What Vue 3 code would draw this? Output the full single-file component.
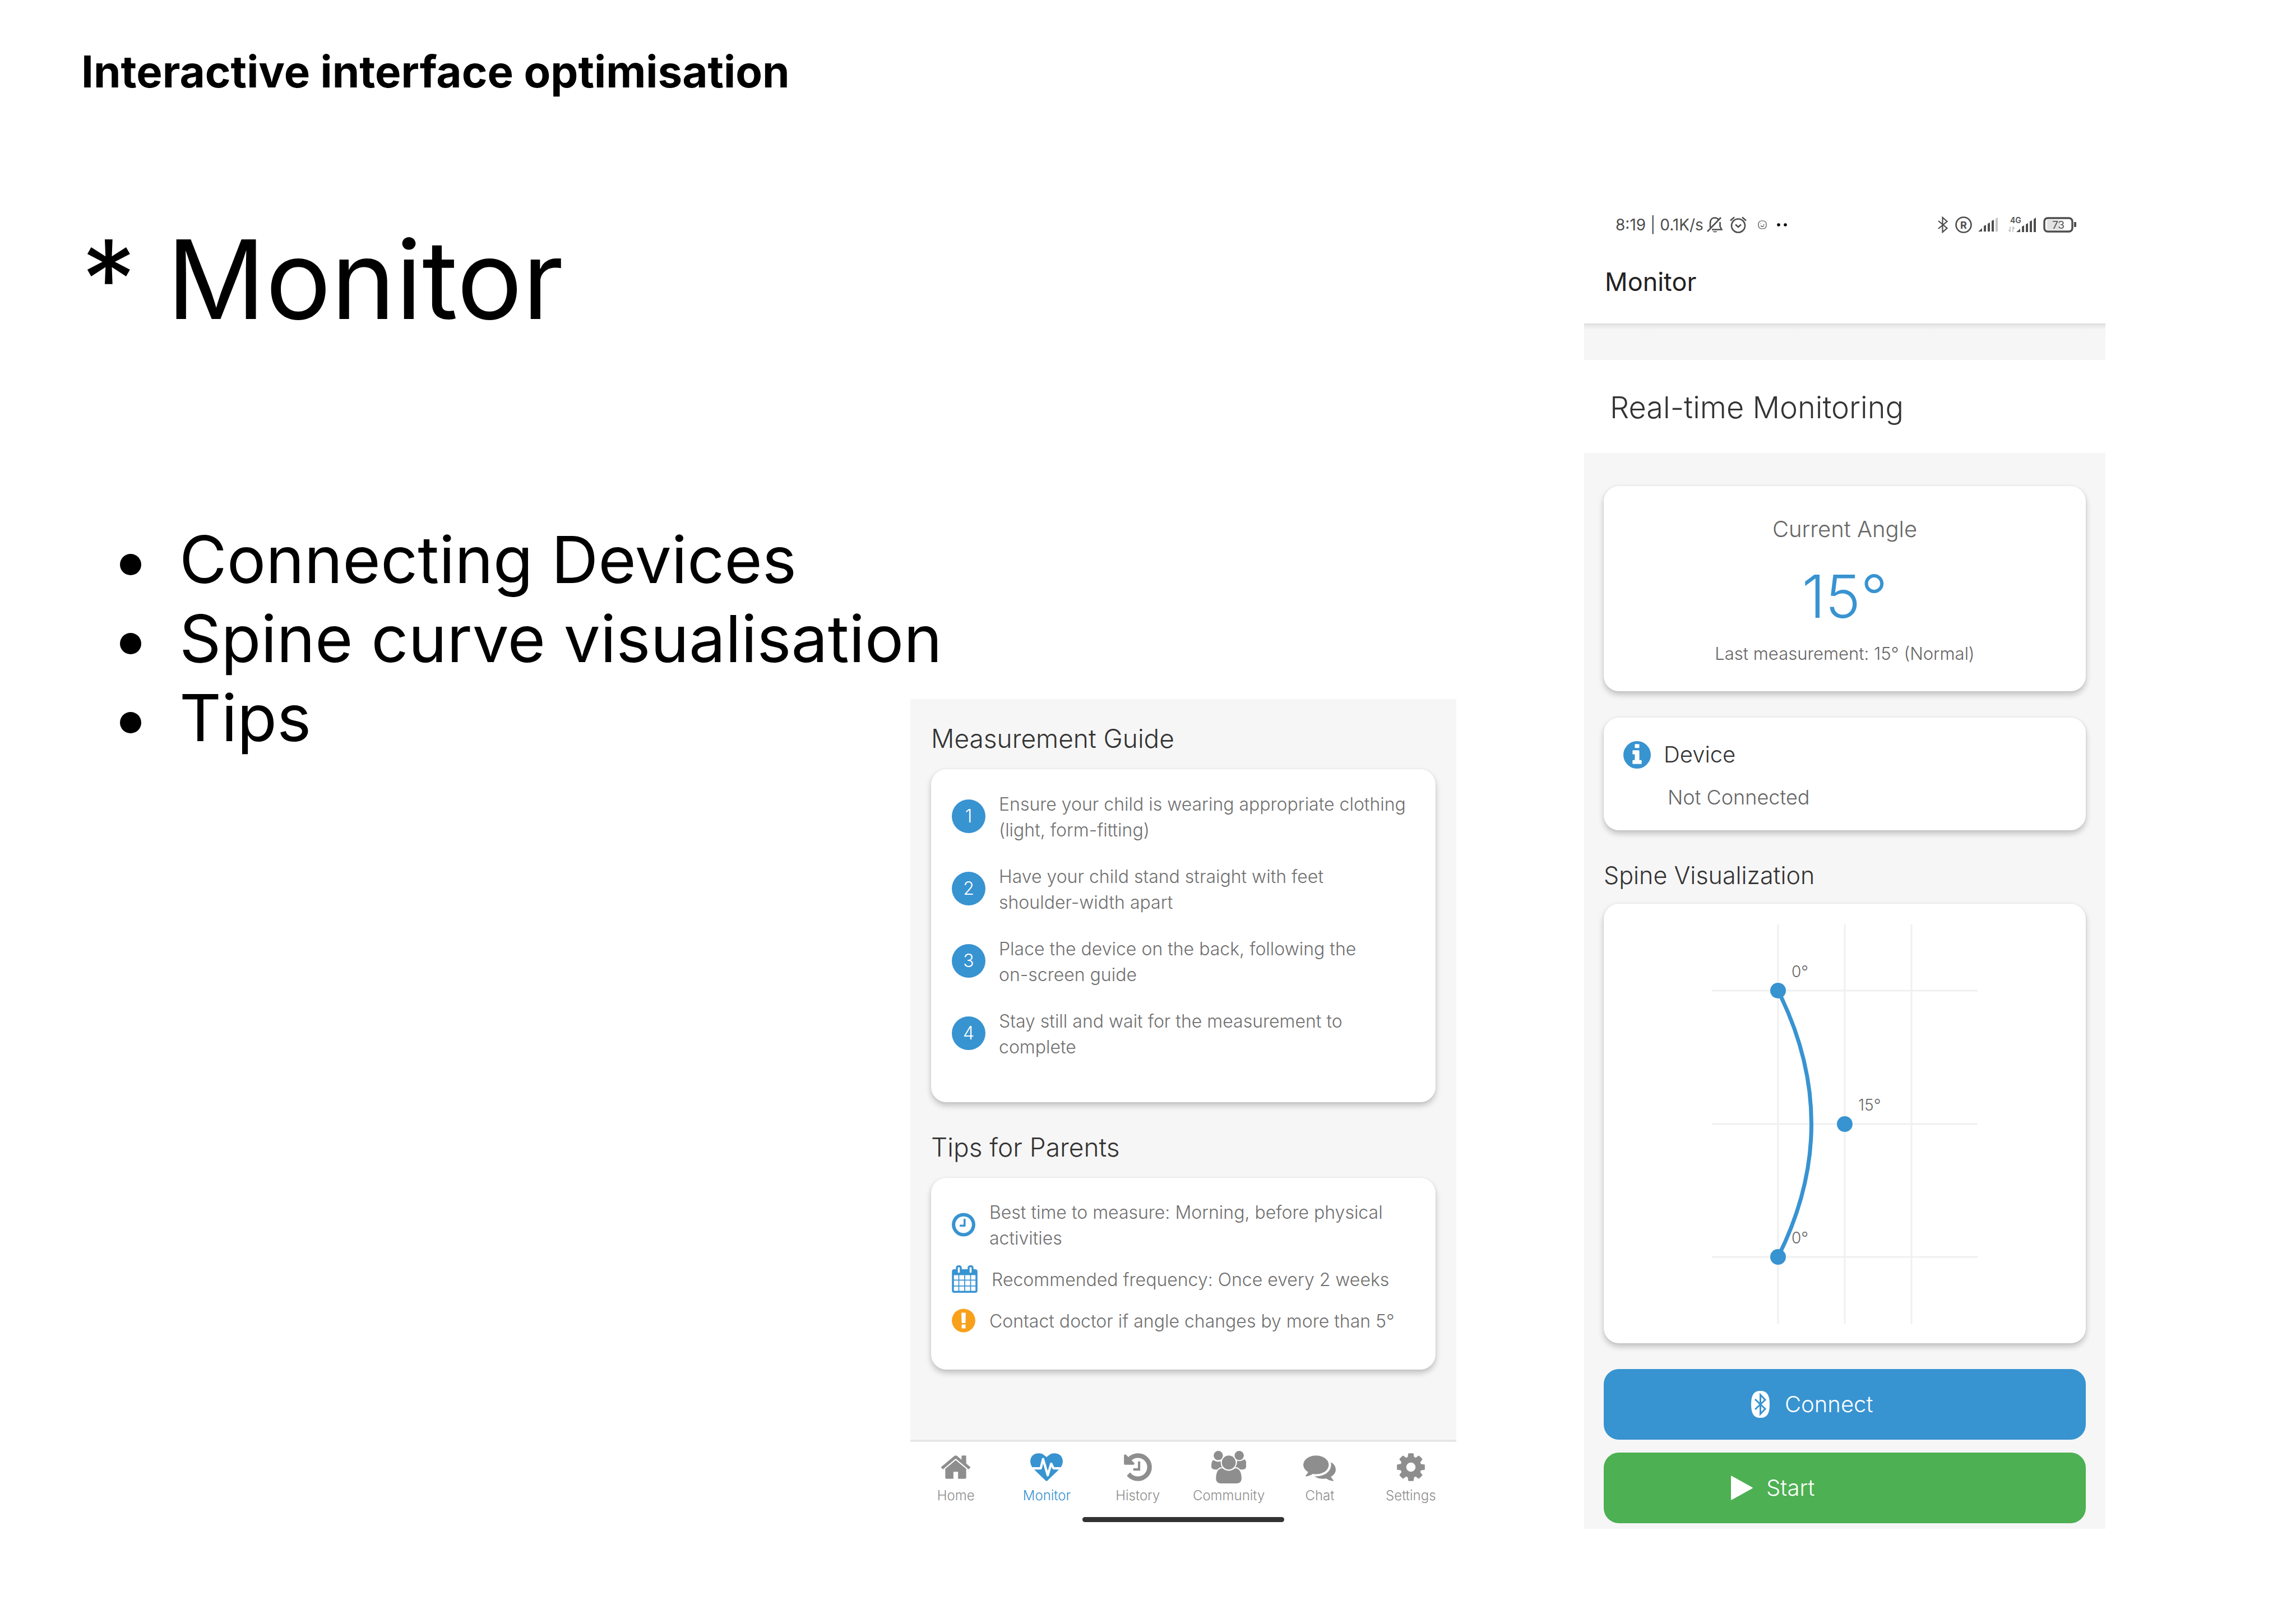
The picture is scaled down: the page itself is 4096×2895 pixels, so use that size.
<script setup>
const features = ['Connecting Devices', 'Spine curve visualisation', 'Tips']

const steps = [
  'Ensure your child is wearing appropriate clothing\n(light, form-fitting)',
  'Have your child stand straight with feet\nshoulder-width apart',
  'Place the device on the back, following the\non-screen guide',
  'Stay still and wait for the measurement to\ncomplete',
]

const tips = [
  {
    text: 'Best time to measure: Morning, before physical\nactivities',
    tone: 'blue',
    box: '128 0 1536 1792',
    size: 42,
    path: 'M1024 544v448q0 14-9 23t-23 9h-320q-14 0-23-9t-9-23v-64q0-14 9-23t23-9h224v-352q0-14 9-23t23-9h64q14 0 23 9t9 23zm416 352q0-148-73-273t-198-198-273-73-273 73-198 198-73 273 73 273 198 198 273 73 273-73 198-198 73-273zm224 0q0 209-103 385.5t-279.5 279.5-385.5 103-385.5-103-279.5-279.5-103-385.5 103-385.5 279.5-279.5 385.5-103 385.5 103 279.5 279.5 103 385.5z',
  },
  {
    text: 'Recommended frequency: Once every 2 weeks',
    tone: 'blue',
    box: '64 0 1664 1792',
    size: 46,
    path: 'M192 1664h288v-288h-288v288zm352 0h320v-288h-320v288zm-352-352h288v-320h-288v320zm352 0h320v-320h-320v320zm-352-384h288v-288h-288v288zm736 736h320v-288h-320v288zm-384-736h320v-288h-320v288zm768 736h288v-288h-288v288zm-384-352h320v-320h-320v320zm-352-864v-288q0-13-9.5-22.5t-22.5-9.5h-64q-13 0-22.5 9.5t-9.5 22.5v288q0 13 9.5 22.5t22.5 9.5h64q13 0 22.5-9.5t9.5-22.5zm736 864h288v-320h-288v320zm-384-384h320v-288h-320v288zm384 0h288v-288h-288v288zm32-480v-288q0-13-9.5-22.5t-22.5-9.5h-64q-13 0-22.5 9.5t-9.5 22.5v288q0 13 9.5 22.5t22.5 9.5h64q13 0 22.5-9.5t9.5-22.5zm384-64v1280q0 52-38 90t-90 38h-1408q-52 0-90-38t-38-90v-1280q0-52 38-90t90-38h128v-96q0-66 47-113t113-47h64q66 0 113 47t47 113v96h384v-96q0-66 47-113t113-47h64q66 0 113 47t47 113v96h128q52 0 90 38t38 90z',
  },
  {
    text: 'Contact doctor if angle changes by more than 5°',
    tone: 'amber',
    box: '128 0 1536 1792',
    size: 42,
    path: 'M896 128q209 0 385.5 103t279.5 279.5 103 385.5-103 385.5-279.5 279.5-385.5 103-385.5-103-279.5-279.5-103-385.5 103-385.5 279.5-279.5 385.5-103zm128 1247v-190q0-14-9-23.5t-22-9.5h-192q-13 0-23 10t-10 23v190q0 13 10 23t23 10h192q13 0 22-9.5t9-23.5zm-2-344l18-621q0-12-10-18-10-8-24-8h-220q-14 0-24 8-10 6-10 18l17 621q0 10 10 17.5t24 7.5h185q14 0 23.5-7.5t10.5-17.5z',
  },
]

const tabs = [
  {
    label: 'Home',
    box: '0 0 1792 1792',
    path: 'M1472 992v480q0 26-19 45t-45 19h-384v-384h-256v384h-384q-26 0-45-19t-19-45v-480q0-1 .5-3t.5-3l575-474 575 474q1 2 1 6zm223-69l-62 74q-8 9-21 11h-3q-13 0-21-7l-692-577-692 577q-12 8-24 7-13-2-21-11l-62-74q-8-10-7-23.5t11-21.5l719-599q32-26 76-26t76 26l244 204v-195q0-14 9-23t23-9h192q14 0 23 9t9 23v408l219 182q10 8 11 21.5t-7 23.5z',
  },
  {
    label: 'Monitor',
    active: true,
    box: '0 0 1792 1792',
    path: 'M1280 1024h305q-5 6-10 10.5t-9 7.5l-3 4-623 600q-18 18-44 18t-44-18l-624-602q-5-2-21-20h369q22 0 39.5-13.5t22.5-34.5l70-281 190 667q6 20 23 33t39 13q21 0 38-13t23-33l146-485 56 112q18 35 57 35zm512-428q0 145-103 300h-369l-111-221q-8-17-25.5-27t-36.5-8q-45 5-56 46l-129 430-196-686q-6-20-23.5-33t-39.5-13-39 13.5-22 34.5l-116 464h-423q-103-155-103-300 0-220 127-344t351-124q62 0 126.5 21.5t120 58 95.5 68.5 76 68q36-36 76-68t95.5-68.5 120-58 126.5-21.5q224 0 351 124t127 344z',
  },
  {
    label: 'History',
    box: '0 0 1792 1792',
    path: 'M1664 896q0 156-61 298t-164 245-245 164-298 61q-172 0-327-72.5t-264-204.5q-7-10-6.5-22.5t8.5-20.5l137-138q10-9 25-9 16 2 23 12 73 95 179 147t225 52q104 0 198.5-40.5t163.5-109.5 109.5-163.5 40.5-198.5-40.5-198.5-109.5-163.5-163.5-109.5-198.5-40.5q-98 0-188 35.5t-160 101.5l137 138q31 30 14 69-17 40-59 40h-448q-26 0-45-19t-19-45v-448q0-42 40-59 39-17 69 14l130 129q107-101 244.5-156.5t284.5-55.5q156 0 298 61t245 164 164 245 61 298zm-640-288v448q0 14-9 23t-23 9h-320q-14 0-23-9t-9-23v-64q0-14 9-23t23-9h224v-352q0-14 9-23t23-9h64q14 0 23 9t9 23z',
  },
  {
    label: 'Community',
    box: '64 0 1920 1792',
    path: 'M657 896q-162 5-265 128h-134q-82 0-138-40.5t-56-118.5q0-353 124-353 6 0 43.5 21t97.5 42.5 119 21.5q67 0 133-23-5 37-5 66 0 159 93 293zm1071 637q0 120-73 189.5t-194 69.5h-874q-121 0-194-69.5t-73-189.5q0-53 3.5-103.5t14-109 26.5-108.5 43-97.5 62-81 85.5-53.5 111.5-20q10 0 43 21.5t73 48 107 48 135 21.5 135-21.5 107-48 73-48 43-21.5q61 0 111.5 20t85.5 53.5 62 81 43 97.5 26.5 108.5 14 109 3.5 103.5zm-1024-1277q0 106-75 181t-181 75-181-75-75-181 75-181 181-75 181 75 75 181zm704 384q0 159-112.5 271.5t-271.5 112.5-271.5-112.5-112.5-271.5 112.5-271.5 271.5-112.5 271.5 112.5 112.5 271.5zm576 225q0 78-56 118.5t-138 40.5h-134q-103-123-265-128 93-134 93-293 0-29-5-66 66 23 133 23 59 0 119-21.5t97.5-42.5 43.5-21q124 0 124 353zm-128-609q0 106-75 181t-181 75-181-75-75-181 75-181 181-75 181 75 75 181z',
  },
  {
    label: 'Chat',
    box: '0 0 1792 1792',
    path: 'M1408 768q0 139-94 257t-256.5 186.5-353.5 68.5q-86 0-176-16-124 88-278 128-36 9-86 16h-3q-11 0-20.5-8t-11.5-21q-1-3-1-6.5t.5-6.5 2-6l2.5-5 3.5-5.5 4-5 4.5-5 4-4.5q5-6 23-25t26-29.5 22.5-29 25-38.5 20.5-44q-124-72-195-177t-71-224q0-139 94-257t256.5-186.5 353.5-68.5 353.5 68.5 256.5 186.5 94 257zm384 256q0 120-71 224.5t-195 176.5q10 24 20.5 44t25 38.5 22.5 29 26 29.5 23 25q1 1 4 4.5t4.5 5 4 5 3.5 5.5l2.5 5 2 6 .5 6.5-1 6.5q-3 14-13 22t-22 7q-50-7-86-16-154-40-278-128-90 16-176 16-271 0-472-132 58 4 88 4 161 0 309-45t264-129q125-92 192-212t67-254q0-77-23-152 129 71 204 178t75 230z',
  },
  {
    label: 'Settings',
    box: '0 0 1792 1792',
    path: 'M1152 896q0-106-75-181t-181-75-181 75-75 181 75 181 181 75 181-75 75-181zm512-109v222q0 12-8 23t-20 13l-185 28q-19 54-39 91 35 50 107 138 10 12 10 25t-9 23q-27 37-99 108t-94 71q-12 0-26-9l-138-108q-44 23-91 38-16 136-29 186-7 28-36 28h-222q-14 0-24.5-8.5t-11.5-21.5l-28-184q-49-16-90-37l-141 107q-10 9-25 9-14 0-25-11-126-114-165-168-7-10-7-23 0-12 8-23 15-21 51-66.5t54-70.5q-27-50-41-99l-183-27q-13-2-21-12.5t-8-23.5v-222q0-12 8-23t19-13l186-28q14-46 39-92-40-57-107-138-10-12-10-24 0-10 9-23 26-36 98.5-107.5t94.5-71.5q13 0 26 10l138 107q44-23 91-38 16-136 29-186 7-28 36-28h222q14 0 24.5 8.5t11.5 21.5l28 184q49 16 90 37l142-107q9-9 24-9 13 0 25 10 129 119 165 170 7 8 7 22 0 12-8 23-15 21-51 66.5t-54 70.5q26 50 41 98l183 28q13 2 21 12.5t8 23.5z',
  },
]

const columns = [118, 237, 356]
const rows = [118, 356, 593]
const points = [
  { x: 118, y: 118, label: '0°' },
  { x: 237, y: 356, label: '15°' },
  { x: 118, y: 593, label: '0°' },
]
</script>

<template>
  <main class="slide">
    <section class="intro">
      <h2 class="kicker">Interactive interface optimisation</h2>
      <h1 class="title">* Monitor</h1>
      <ul class="features">
        <li v-for="f in features" :key="f">{{ f }}</li>
      </ul>
    </section>

    <section class="screen guide">
      <div class="guide-body">
        <h3 class="section-title">Measurement Guide</h3>
        <ol class="card steps">
          <li v-for="(s, i) in steps" :key="s">
            <span class="num">{{ i + 1 }}</span>
            <p>{{ s }}</p>
          </li>
        </ol>
        <h3 class="section-title second">Tips for Parents</h3>
        <ul class="card tips">
          <li v-for="t in tips" :key="t.text">
            <svg :class="t.tone" :width="t.size" height="49" :viewBox="t.box" aria-hidden="true"><path :d="t.path" /></svg>
            <p>{{ t.text }}</p>
          </li>
        </ul>
      </div>
      <nav class="tabs">
        <a v-for="t in tabs" :key="t.label" href="#" :class="{ active: t.active }">
          <svg height="58" :viewBox="t.box" aria-hidden="true"><path :d="t.path" /></svg>
          <span>{{ t.label }}</span>
        </a>
      </nav>
      <div class="indicator-row"><span class="indicator"></span></div>
    </section>

    <section class="screen phone">
      <header class="top">
        <div class="status">
          <span class="clock">8:19 | 0.1K/s</span>
          <svg class="bell" width="28" height="30" viewBox="0 0 28 30" fill="none" stroke="#4d4d4d" stroke-width="2.6">
            <path d="M1 27L25 2M6 20V12C6 6 9 2.5 14 2.5c3 0 5 1 6.500 3M23.500 10v8l3 5.500H9" />
            <path d="M10 26.500h9q-4.500 4-9 0z" fill="#4d4d4d" stroke="none" />
          </svg>
          <svg class="alarm" width="30" height="30" viewBox="0 0 30 30" fill="none" stroke="#4d4d4d" stroke-width="2.600">
            <circle cx="15" cy="16.500" r="12" />
            <path d="M1 7.500L8 1.500M29 7.500L22 1.500M10 14.500l5 4.500 5-4.500" />
          </svg>
          <svg class="face" width="16" height="16" viewBox="0 0 16 16" fill="none" stroke="#444" stroke-width="1.200">
            <rect x="1" y="1" width="14" height="14" rx="5.500" />
            <path d="M5 5.500v1M9.500 7.500h2M5 9.500q3 3 6 0" />
          </svg>
          <svg class="dots" width="18" height="6" viewBox="0 0 18 6"><circle cx="3" cy="3" r="2.800" /><circle cx="15" cy="3" r="2.800" /></svg>
          <span class="spacer"></span>
          <svg width="18" height="32" viewBox="0 0 18 32" fill="none" stroke="#4d4d4d" stroke-width="2.200">
            <path d="M1 9l15.500 13L8.500 29V3l8 7L1 23" />
          </svg>
          <svg class="reg" width="30" height="30" viewBox="0 0 30 30">
            <circle cx="15" cy="15" r="13.500" fill="none" stroke="#4d4d4d" stroke-width="2.600" />
            <text x="15" y="21.500" text-anchor="middle" font-size="18" font-weight="700" fill="#4d4d4d">R</text>
          </svg>
          <svg class="signal" width="36" height="26" viewBox="0 0 36 26" fill="#4d4d4d">
            <path d="M0 25l7-6v6zM10 15l4-2v12h-4zM17 11l4-2v16h-4zM24 6l4-2v21h-4z" />
            <path d="M31 2l4-2v25h-4z" fill="#c4c4c4" />
          </svg>
          <svg class="mobile" width="50" height="36" viewBox="0 -4 50 36" fill="#4d4d4d">
            <text x="3" y="11" font-size="14" font-weight="600">4G</text>
            <path d="M14 27l7-6v6zM24 17l4-2v12h-4zM31 13l4-2v16h-4zM38 8l4-2v21h-4zM45 4l4-3v26h-4z" />
            <path d="M3 17v9l-3-3M8 27v-9l3 3" fill="none" stroke="#aaa" stroke-width="1.200" />
          </svg>
          <svg class="battery" width="59" height="28" viewBox="0 0 59 28">
            <rect x="7" y="5" width="23" height="18" fill="#e2e2e2" />
            <rect x="2" y="2" width="50" height="24" rx="6" fill="none" stroke="#4d4d4d" stroke-width="3.400" />
            <rect x="55" y="9" width="4" height="9" rx="1" fill="#4d4d4d" />
            <text x="27" y="21" text-anchor="middle" font-size="19" fill="#4d4d4d">73</text>
          </svg>
        </div>
        <h2 class="app-title">Monitor</h2>
      </header>
      <div class="band"></div>
      <h3 class="page-title">Real-time Monitoring</h3>

      <div class="phone-body">
        <div class="card angle">
          <p class="angle-label">Current Angle</p>
          <p class="angle-value">15°</p>
          <p class="angle-last">Last measurement: 15° (Normal)</p>
        </div>

        <div class="card device">
          <div class="device-row">
            <svg class="blue" width="49" height="57" viewBox="128 0 1536 1792" aria-hidden="true">
              <path d="M1152 1376v-160q0-14-9-23t-23-9h-96v-512q0-14-9-23t-23-9h-320q-14 0-23 9t-9 23v160q0 14 9 23t23 9h96v320h-96q-14 0-23 9t-9 23v160q0 14 9 23t23 9h448q14 0 23-9t9-23zm-128-896v-160q0-14-9-23t-23-9h-192q-14 0-23 9t-9 23v160q0 14 9 23t23 9h192q14 0 23-9t9-23zm640 416q0 209-103 385.500t-279.500 279.500-385.500 103-385.500-103-279.500-279.500-103-385.500 103-385.500 279.500-279.500 385.500-103 385.500 103 279.500 279.500 103 385.500z" />
            </svg>
            <span>Device</span>
          </div>
          <p class="device-state">Not Connected</p>
        </div>

        <h3 class="spine-title">Spine Visualization</h3>
        <div class="card spine">
          <svg width="474" height="712" viewBox="0 0 474 712" role="img" aria-label="Spine curve">
            <g stroke="#f0f0f0" stroke-width="3">
              <line v-for="x in columns" :key="'c' + x" :x1="x" y1="0" :x2="x" y2="712" />
              <line v-for="y in rows" :key="'r' + y" x1="0" :y1="y" x2="474" :y2="y" />
            </g>
            <path d="M118 118Q237 356 118 593" fill="none" stroke="#3893d1" stroke-width="7" />
            <g v-for="p in points" :key="p.x + '-' + p.y">
              <circle :cx="p.x" :cy="p.y" r="14" fill="#3893d1" />
              <text :x="p.x + 24" :y="p.y - 24" font-size="28" font-weight="300" fill="#666">{{ p.label }}</text>
            </g>
          </svg>
        </div>

        <button type="button" class="action connect">
          <svg width="35" height="50" viewBox="0 0 35 50" aria-hidden="true">
            <path d="M17.500 1C29 1 34 8 34 25S29 49 17.500 49 1 42 1 25 6 1 17.500 1z" fill="#fff" />
            <path d="M8 16l18 17-8.500 9V8l8.500 9L8 34" fill="none" stroke="#3893d1" stroke-width="3" />
          </svg>
          Connect
        </button>
        <button type="button" class="action start">
          <svg width="39" height="44" viewBox="0 0 39 44" aria-hidden="true"><path d="M0 1.500Q0 0 1.500 .8L38 21q1.500 1 0 2L1.500 43.200Q0 44 0 42.500z" fill="#fff" /></svg>
          Start
        </button>
      </div>
    </section>
  </main>
</template>

<style>
body {
  margin: 0;
  background: #fff;
}
</style>

<style scoped>
.slide {
  box-sizing: border-box;
  min-height: 100vh;
  padding-bottom: 168px;
  display: grid;
  grid-template-columns: 1624fr 974fr 228fr 930fr 340fr;
  align-items: end;
  background: #fff;
  color: #000;
  font-family: Inter, "Noto Sans", sans-serif;
}
h1, h2, h3, p, ul, ol {
  margin: 0;
  padding: 0;
  list-style: none;
}
svg {
  display: block;
  flex: none;
}

/* Slide text */
.intro {
  min-width: 0;
  align-self: start;
  padding: 80px 0 0 145px;
  white-space: nowrap;
}
.kicker {
  font-size: 78px;
  line-height: 96px;
  font-weight: 700;
}
.title {
  margin-top: 204px;
  font-size: 195px;
  line-height: 237px;
  font-weight: 400;
}
.features {
  margin-top: 311px;
  font-size: 116px;
  line-height: 141px;
}
.features li {
  display: flex;
  align-items: center;
}
.features li::before {
  content: "";
  flex: none;
  width: 38px;
  height: 38px;
  margin: 16px 68px 0 69px;
  border-radius: 50%;
  background: #000;
}

/* Shared screen parts */
.screen {
  min-width: 0;
  font-weight: 300;
  color: #333;
}
.card {
  border-radius: 27px;
  background: #fff;
  box-shadow: 0 6px 11px rgba(0, 0, 0, 0.22), 0 0 4px rgba(0, 0, 0, 0.06);
}
.blue {
  fill: #3893d1;
}
.amber {
  fill: #f9a01b;
}

/* Guide screen */
.guide {
  grid-column: 2;
}
.guide-body {
  padding: 38px 37px 125px;
  background: #f6f6f6;
}
.section-title {
  margin-bottom: 23px;
  font-size: 46px;
  line-height: 64px;
  font-weight: 300;
}
.second {
  margin-top: 48px;
}
.steps {
  padding: 36px 37px 42px;
  display: flex;
  flex-direction: column;
  gap: 33px;
}
.steps li {
  display: flex;
  align-items: center;
  gap: 24px;
}
.steps::after {
  content: "";
}
.num {
  flex: none;
  width: 60px;
  height: 60px;
  border-radius: 50%;
  background: #3893d1;
  color: #fff;
  font-size: 32px;
  line-height: 60px;
  text-align: center;
}
.steps p, .tips p {
  padding-top: 4px;
  font-size: 32px;
  line-height: 46px;
  color: #707070;
  white-space: pre-line;
}
.tips {
  padding: 35px 37px 63px;
  display: flex;
  flex-direction: column;
  gap: 24px;
}
.tips li {
  display: flex;
  align-items: center;
  gap: 25px;
}
.tabs {
  display: grid;
  grid-template-columns: repeat(6, 1fr);
  padding-top: 16px;
  border-top: 4px solid #e6e6e6;
}
.tabs a {
  display: flex;
  flex-direction: column;
  align-items: center;
  gap: 7px;
  color: #8e8e8e;
  fill: #8e8e8e;
  font-size: 24px;
  line-height: 30px;
  text-decoration: none;
}
.tabs a.active {
  color: #3893d1;
  fill: #3893d1;
}
.indicator-row {
  display: flex;
  justify-content: center;
  padding: 23px 0 12px;
}
.indicator {
  width: 37%;
  height: 9px;
  border-radius: 5px;
  background: #333;
}

/* Phone screen */
.phone {
  grid-column: 4;
  background: #f6f6f6;
}
.top {
  padding-bottom: 46px;
  background: #fff;
}
.status {
  display: flex;
  align-items: center;
  height: 32px;
  padding: 0 52px 0 56px;
  font-size: 28px;
  font-weight: 400;
  color: #4d4d4d;
  white-space: nowrap;
}
.bell { margin-left: 6px; }
.alarm { margin-left: 13px; }
.face { margin-left: 20px; }
.dots { margin-left: 18px; }
.spacer { flex: 1; }
.reg { margin-left: 13px; }
.signal { margin-left: 11px; }
.mobile { margin-left: 18px; }
.battery { margin-left: 12px; }
.app-title {
  margin: 58px 0 0 37px;
  font-size: 45px;
  line-height: 56px;
  font-weight: 400;
  color: #222;
}
.band {
  height: 65px;
  background: linear-gradient(#dadada, #ececec 5px, #f6f6f6 12px);
}
.page-title {
  padding: 52px 46px 48px;
  background: #fff;
  font-size: 54px;
  line-height: 66px;
  font-weight: 300;
}
.phone-body {
  padding: 59px 35px 10px;
}
.angle {
  padding: 53px 35px 47px;
  text-align: center;
  color: #666;
}
.angle-label {
  font-size: 40px;
  line-height: 48px;
}
.angle-value {
  margin: 33px 0 19px;
  font-size: 106px;
  line-height: 126px;
  color: #3893d1;
}
.angle-last {
  font-size: 31px;
  line-height: 40px;
}
.device {
  margin-top: 47px;
  padding: 42px 35px 37px;
}
.device-row {
  display: flex;
  align-items: center;
  gap: 23px;
  height: 48px;
  font-size: 40px;
  line-height: 48px;
}
.device-state {
  margin: 30px 0 0 79px;
  font-size: 36px;
  line-height: 44px;
  color: #666;
}
.spine-title {
  margin: 53px 0 24px;
  font-size: 43px;
  line-height: 54px;
  font-weight: 300;
}
.spine {
  display: flex;
  justify-content: center;
  padding: 37px 36px 35px;
}
.action {
  display: flex;
  align-items: center;
  box-sizing: border-box;
  width: 100%;
  height: 126px;
  border: 0;
  border-radius: 27px;
  color: #fff;
  font-family: inherit;
  font-size: 40px;
  line-height: 48px;
  font-weight: 300;
}
.connect {
  margin-top: 46px;
  padding: 0 262px;
  gap: 26px;
  background: #3893d1;
}
.start {
  margin-top: 23px;
  padding: 0 227px;
  gap: 24px;
  background: #4db052;
}
</style>
